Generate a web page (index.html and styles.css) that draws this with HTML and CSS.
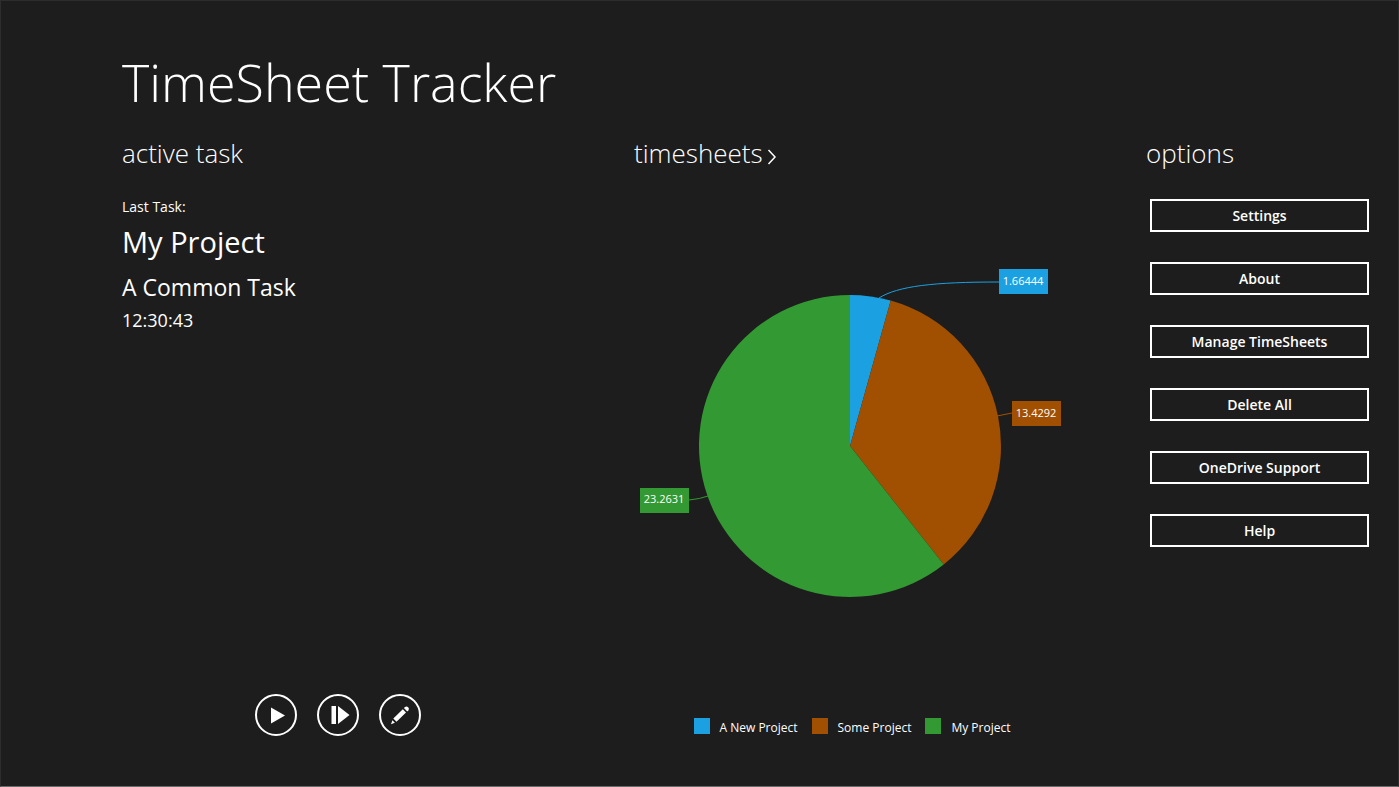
FILE: index.html
```
<!DOCTYPE html>
<html lang="en">
<head>
    <meta charset="UTF-8">
    <meta name="viewport" content="width=device-width, initial-scale=1.0">
    <title>TimeSheet Tracker</title>
    <link rel="stylesheet" href="styles.css">
</head>
<body>

    <header class="page-header">
        <h1>TimeSheet Tracker</h1>
    </header>

    <main class="hub">
        <section class="active-task">
            <h2>active task</h2>
            <div class="task-info">
                <p class="task-label">Last Task:</p>
                <p class="task-project">My Project</p>
                <p class="task-name">A Common Task</p>
                <p class="task-time">12:30:43</p>
            </div>
            <div class="task-controls">
                <button type="button" class="round-button" aria-label="Start">
                    <svg viewBox="0 0 42 42"><path d="M16 13.5 L30 21.5 L16 29.5 Z"/></svg>
                </button>
                <button type="button" class="round-button" aria-label="Resume">
                    <svg viewBox="0 0 42 42"><path d="M14.5 12 H19 V30 H14.5 Z M21 12 L32.5 21 L21 30 Z"/></svg>
                </button>
                <button type="button" class="round-button" aria-label="Edit">
                    <svg viewBox="0 0 42 42">
                        <path d="M23.8 15.2 L27 18.4 L17.5 27.8 L14.3 24.6 Z"/>
                        <path d="M24.9 14.1 L26 13 Q27.6 11.8 29.2 13.2 Q30.6 14.8 29.4 16.2 L28.2 17.4 Z"/>
                        <path d="M13.4 26.2 L15.9 28.7 L12 30.2 Z"/>
                    </svg>
                </button>
            </div>
        </section>

        <section class="timesheets">
            <h2>
                <a href="#timesheets">timesheets<svg class="chevron" viewBox="0 0 10 18"><path d="M1.5 2 L8 9 L1.5 16"/></svg></a>
            </h2>
            <div class="chart">
                <svg class="pie" viewBox="0 0 432 360" role="img" aria-label="Hours per project">
                    <!-- slices -->
                    <path class="fill-blue" d="M216 196 V45 A151 151 0 0 1 256.7 50.6 Z"/>
                    <path class="fill-brown" d="M216 196 L256.7 50.6 A151 151 0 0 1 309.7 314.4 Z"/>
                    <path class="fill-green" d="M216 196 L309.7 314.4 A151 151 0 1 1 216 45 Z"/>
                    <!-- label lines -->
                    <path class="line line-blue" d="M245 48 C264 36 300 32 365 32"/>
                    <path class="line line-brown" d="M363 166 L378 163"/>
                    <path class="line line-green" d="M74 246 Q66 249 55 250"/>
                    <!-- labels -->
                    <rect class="fill-blue" x="365" y="19" width="49" height="25"/>
                    <text x="389" y="35">1.66444</text>
                    <rect class="fill-brown" x="378" y="151" width="49" height="25"/>
                    <text x="402" y="167">13.4292</text>
                    <rect class="fill-green" x="6" y="238" width="49" height="25"/>
                    <text x="30" y="253">23.2631</text>
                </svg>
                <ul class="legend">
                    <li><span class="swatch blue"></span>A New Project</li>
                    <li><span class="swatch brown"></span>Some Project</li>
                    <li><span class="swatch green"></span>My Project</li>
                </ul>
            </div>
        </section>

        <section class="options">
            <h2>options</h2>
            <div class="option-list">
                <button type="button">Settings</button>
                <button type="button">About</button>
                <button type="button">Manage TimeSheets</button>
                <button type="button">Delete All</button>
                <button type="button">OneDrive Support</button>
                <button type="button">Help</button>
            </div>
        </section>
    </main>

</body>
</html>
```
FILE: styles.css
```
* {
    box-sizing: border-box;
}

body {
    display: flex;
    flex-direction: column;
    min-height: 100vh;
    margin: 0;
    padding: 48px 29px 48px 121px;
    border: 1px solid #2d2d2d;
    border-bottom-color: #6a6a6a;
    background-color: #1d1d1d;
    color: #fff;
    font-family: 'Open Sans', 'Noto Sans', sans-serif;
}

h1, h2, p, ul {
    margin: 0;
    padding: 0;
}

h1 {
    font-size: 52px;
    font-weight: 300;
    line-height: 66px;
}

h2 {
    font-size: 26px;
    font-weight: 350;
    line-height: 32px;
}

h2 a {
    color: inherit;
    text-decoration: none;
}

button {
    color: #fff;
    background: transparent;
    font-family: inherit;
    cursor: pointer;
}

.hub {
    display: grid;
    grid-template-columns: 512fr 512fr 223fr;
    flex: 1;
    margin-top: 22px;
}

.active-task, .timesheets {
    display: flex;
    flex-direction: column;
}

/* active task */
.task-info {
    margin-top: 28px;
}

.task-label {
    font-size: 14px;
    line-height: 20px;
}

.task-project {
    margin-top: 5px;
    font-size: 29px;
    line-height: 40px;
}

.task-name {
    margin-top: 9px;
    font-size: 23px;
    line-height: 32px;
}

.task-time {
    margin-top: 5px;
    font-size: 18px;
    line-height: 24px;
}

.task-controls {
    display: flex;
    justify-content: center;
    gap: 20px;
    max-width: 432px;
    margin-top: auto;
    margin-bottom: 2px;
}

.round-button {
    width: 42px;
    height: 42px;
    padding: 0;
    border: 2px solid #fff;
    border-radius: 50%;
}

.round-button svg {
    display: block;
    width: 42px;
    height: 42px;
    margin: -2px;
    fill: #fff;
}

/* timesheets */
.chevron {
    width: 10px;
    height: 18px;
    margin-left: 4px;
    vertical-align: -3px;
    fill: none;
    stroke: #fff;
    stroke-width: 1.5;
}

.chart {
    display: flex;
    flex: 1;
    flex-direction: column;
    align-items: center;
    max-width: 432px;
    margin-top: 81px;
}

.pie {
    width: 100%;
}

.pie text {
    fill: #fff;
    font-size: 11px;
    text-anchor: middle;
}

.fill-blue { fill: #1ba1e2; }
.fill-brown { fill: #a05000; }
.fill-green { fill: #339933; }

.line { fill: none; stroke-width: 1; }
.line-blue { stroke: #1ba1e2; }
.line-brown { stroke: #a05000; }
.line-green { stroke: #339933; }

.legend {
    display: flex;
    gap: 14px;
    margin-top: auto;
    padding-left: 4px;
    list-style: none;
    font-size: 12px;
    line-height: 20px;
}

.legend li {
    display: flex;
    gap: 10px;
}

.swatch {
    width: 16px;
    height: 16px;
}

.blue { background-color: #1ba1e2; }
.brown { background-color: #a05000; }
.green { background-color: #339933; }

/* options */
.option-list {
    display: flex;
    flex-direction: column;
    gap: 30px;
    margin-top: 30px;
    padding-left: 4px;
}

.option-list button {
    padding: 5px 8px;
    border: 2px solid #fff;
    font-size: 14px;
    font-weight: 600;
    line-height: 19px;
}

button:hover {
    background-color: #3a3a3a;
}
```
